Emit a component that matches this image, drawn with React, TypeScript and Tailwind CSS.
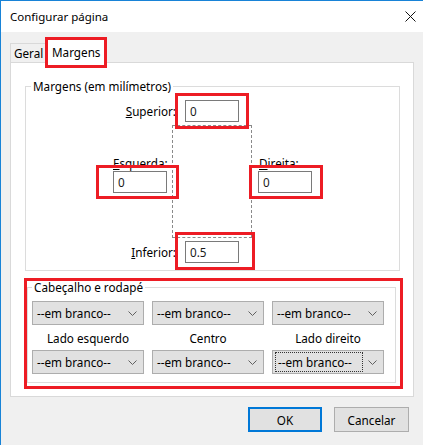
import React from "react";

const RED = "border-[3px] border-[#ed1c24]";

function Chevron() {
  return (
    <svg width="9" height="5" viewBox="0 0 9 5" className="shrink-0">
      <path d="M0.5 0.5 L4.5 4.5 L8.5 0.5" fill="none" stroke="#606060" strokeWidth="1" />
    </svg>
  );
}

function Select({ focus = false }: { focus?: boolean }) {
  return (
    <div className="w-[112px] h-[24px] bg-[#e1e1e1] border border-[#adadad] flex items-center pr-[6px]">
      {focus ? (
        <div className="ml-[2px] h-[20px] w-[88px] border border-dotted border-[#333] flex items-center pl-[2px]">
          --em branco--
        </div>
      ) : (
        <div className="pl-[4px] flex-1">--em branco--</div>
      )}
      {focus && <div className="flex-1" />}
      <Chevron />
    </div>
  );
}

function Input({ value }: { value: string }) {
  return (
    <div className="w-[54px] h-[22px] bg-white border border-[#7a7a7a] flex items-center pl-[4px] text-[#1a1a1a]">
      {value}
    </div>
  );
}

export default function App() {
  return (
    <div className="w-[423px] h-[445px] bg-[#f0f0f0] border-t border-l border-[#1883d7] font-['Noto_Sans',sans-serif] text-[11.7px] leading-[16px] text-black overflow-hidden">
      {/* Title bar */}
      <div className="h-[31px] bg-white flex items-center justify-between pl-[9px] pr-[7px]">
        <span className="text-[11.5px]">Configurar página</span>
        <svg width="11" height="11" viewBox="0 0 11 11">
          <path d="M0.5 0.5 L10.5 10.5 M10.5 0.5 L0.5 10.5" stroke="#111" strokeWidth="1" />
        </svg>
      </div>

      {/* Tabs */}
      <div className="h-[30px] flex items-end pl-[9px]">
        <div className="w-[36px] h-[19px] border-t border-l border-[#d9d9d9] flex items-center pl-[3px]">
          Geral
        </div>
        <div className="relative z-10 -mb-px w-[60px] h-[24px] bg-white border-t border-l border-r border-[#d9d9d9] flex items-center pl-[5px]">
          Margens
          <div className={`absolute -left-[2px] -right-[2px] -top-[3px] -bottom-[5px] ${RED}`} />
        </div>
      </div>

      {/* Panel */}
      <div className="ml-[9px] w-[404px] h-[335px] bg-white border border-[#d9d9d9] pl-[14px] pt-[15px]">
        <fieldset className="w-[375px] h-[193px] border border-[#dcdcdc]">
          <legend className="ml-[5px] px-[2px]">Margens (em milímetros)</legend>
          {/* Superior */}
          <div className="flex items-center mt-[6px]">
            <div className="w-[150px] text-right">
              <span className="underline">S</span>uperior:
            </div>
            <div className="relative ml-[9px]">
              <Input value="0" />
              <div className={`absolute -left-[10px] -right-[10px] -top-[7px] -bottom-[7px] ${RED}`} />
            </div>
          </div>
          {/* Middle */}
          <div className="flex mt-[3px] h-[113px]">
            <div className="ml-[87px] w-[54px] pt-[30px] flex flex-col">
              <div className="text-right whitespace-nowrap">
                <span className="underline">E</span>squerda:
              </div>
              <div className="relative">
                <Input value="0" />
                <div className={`absolute -left-[17px] -right-[12px] -top-[6px] -bottom-[6px] ${RED}`} />
              </div>
            </div>
            <div className="ml-[5px] w-[80px] h-[113px] border border-dashed border-[#8a8a8a]" />
            <div className="ml-[6px] w-[54px] pt-[30px] flex flex-col">
              <div className="pl-[1px] whitespace-nowrap">
                <span className="underline">D</span>ireita:
              </div>
              <div className="relative">
                <Input value="0" />
                <div className={`absolute -left-[9px] -right-[11px] -top-[6px] -bottom-[6px] ${RED}`} />
              </div>
            </div>
          </div>
          {/* Inferior */}
          <div className="flex items-center mt-[3px]">
            <div className="w-[150px] text-right">
              <span className="underline">I</span>nferior:
            </div>
            <div className="relative ml-[9px]">
              <Input value="0.5" />
              <div className={`absolute -left-[10px] -right-[16px] -top-[9px] -bottom-[7px] ${RED}`} />
            </div>
          </div>
        </fieldset>

        <div className="relative mt-[8px] w-[378px]">
          <fieldset className="ml-[2px] w-[369px] h-[104px] border border-[#dcdcdc]">
            <legend className="ml-[4px] px-[2px]">Cabeçalho e rodapé</legend>
            <div className="flex mt-[6px] ml-[4px] gap-x-[8px]">
              <Select />
              <Select />
              <Select />
            </div>
            <div className="flex h-[25px] items-center ml-[4px] gap-x-[8px]">
              <div className="w-[112px] text-center">Lado esquerdo</div>
              <div className="w-[112px] text-center">Centro</div>
              <div className="w-[112px] text-center">Lado direito</div>
            </div>
            <div className="flex ml-[4px] gap-x-[8px]">
              <Select />
              <Select />
              <Select focus />
            </div>
          </fieldset>
          <div className={`absolute -left-[1px] right-0 -top-[1px] h-[111px] ${RED}`} />
        </div>
      </div>

      {/* Buttons */}
      <div className="flex justify-end gap-x-[12px] pr-[14px] mt-[10px]">
        <button className="w-[74px] h-[25px] bg-[#e1e1e1] border-2 border-[#0078d7] flex items-center justify-center">
          OK
        </button>
        <button className="w-[75px] h-[25px] bg-[#e1e1e1] border border-[#adadad] flex items-center justify-center">
          Cancelar
        </button>
      </div>
    </div>
  );
}
